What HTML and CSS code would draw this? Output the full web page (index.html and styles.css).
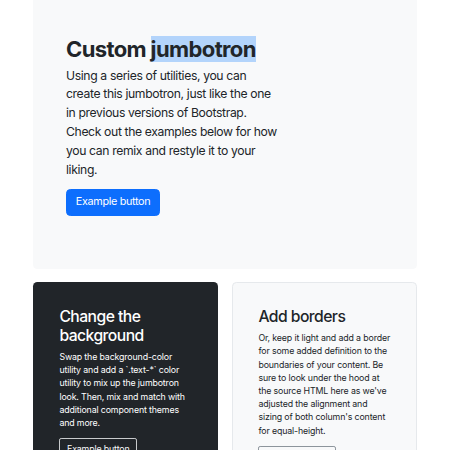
FILE: index.html
```html
<!DOCTYPE html>
<html lang="en">
<head>
<meta charset="utf-8">
<title>Jumbotron</title>
<link rel="stylesheet" href="styles.css">
</head>
<body>
<main class="container">
  <section class="jumbotron">
    <h1 class="jumbo-title">Custom <span class="sel">jumbotron</span></h1>
    <p class="jumbo-text">Using a series of utilities, you can create this jumbotron, just like the one in previous versions of Bootstrap. Check out the examples below for how you can remix and restyle it to your liking.</p>
    <button class="btn btn-primary-lg" type="button">Example button</button>
  </section>
  <div class="row">
    <div class="card card-dark">
      <h2 class="card-title">Change the background</h2>
      <p class="card-text">Swap the background-color utility and add a `.text-*` color utility to mix up the jumbotron look. Then, mix and match with additional component themes and more.</p>
      <button class="btn btn-outline-light" type="button">Example button</button>
    </div>
    <div class="card card-light">
      <h2 class="card-title">Add borders</h2>
      <p class="card-text">Or, keep it light and add a border for some added definition to the boundaries of your content. Be sure to look under the hood at the source HTML here as we've adjusted the alignment and sizing of both column's content for equal-height.</p>
      <button class="btn btn-outline-secondary" type="button">Example button</button>
    </div>
  </div>
</main>
</body>
</html>
```

FILE: styles.css
```css
* { box-sizing: border-box; }

html, body {
  margin: 0;
  padding: 0;
  background: #fff;
}

body {
  font-family: Inter, "Noto Sans", "Liberation Sans", sans-serif;
  color: #212529;
  font-size: 8.8px;
  line-height: 1.5;
  overflow: hidden;
}

.container {
  width: 384px;
  margin: -17px auto 0;
}

.jumbotron {
  background: #f8f9fa;
  border-radius: 4.4px;
  padding: 52.8px 33px;
  margin-bottom: 13px;
}

.jumbo-title {
  font-size: 22px;
  font-weight: 700;
  line-height: 1.2;
  letter-spacing: -0.028em;
  margin: 0 0 4.4px;
}

.sel {
  background: #b3d4fb;
}

.jumbo-text {
  width: 215px;
  font-size: 12.2px;
  line-height: 18.86px;
  letter-spacing: -0.03em;
  margin: 0 0 8.8px;
}

.btn {
  display: inline-block;
  font-family: inherit;
  background: transparent;
  border: 1px solid transparent;
  cursor: pointer;
  white-space: nowrap;
}

.btn-primary-lg {
  background: #0d6efd;
  border-color: #0d6efd;
  color: #fff;
  font-size: 10.8px;
  line-height: 16.5px;
  letter-spacing: -0.03em;
  padding: 4.4px 8.8px;
  border-radius: 4.4px;
}

.row {
  display: grid;
  grid-template-columns: 1fr 1fr;
  gap: 14px;
  align-items: stretch;
}

.card {
  border-radius: 4.4px;
  padding: 26.4px;
  min-height: 220px;
}

.card-dark {
  background: #212529;
  color: #fff;
}

.card-light {
  background: #f8f9fa;
  border: 1px solid #e6e9ec;
  padding: 25.4px;
}

.card-title {
  font-size: 15.7px;
  font-weight: 500;
  line-height: 1.2;
  letter-spacing: -0.035em;
  margin: 0 0 4.4px;
}

.card-text {
  font-size: 8.8px;
  line-height: 1.5;
  letter-spacing: -0.015em;
  margin: 0 0 8.8px;
}

.btn-outline-light,
.btn-outline-secondary {
  font-size: 8.8px;
  line-height: 1.5;
  letter-spacing: -0.015em;
  padding: 3.3px 6.6px;
  border-radius: 2.1px;
}

.btn-outline-light {
  color: #f8f9fa;
  border-color: #c9cbcd;
}

.btn-outline-secondary {
  color: #6c757d;
  border-color: #8d959c;
}
```
